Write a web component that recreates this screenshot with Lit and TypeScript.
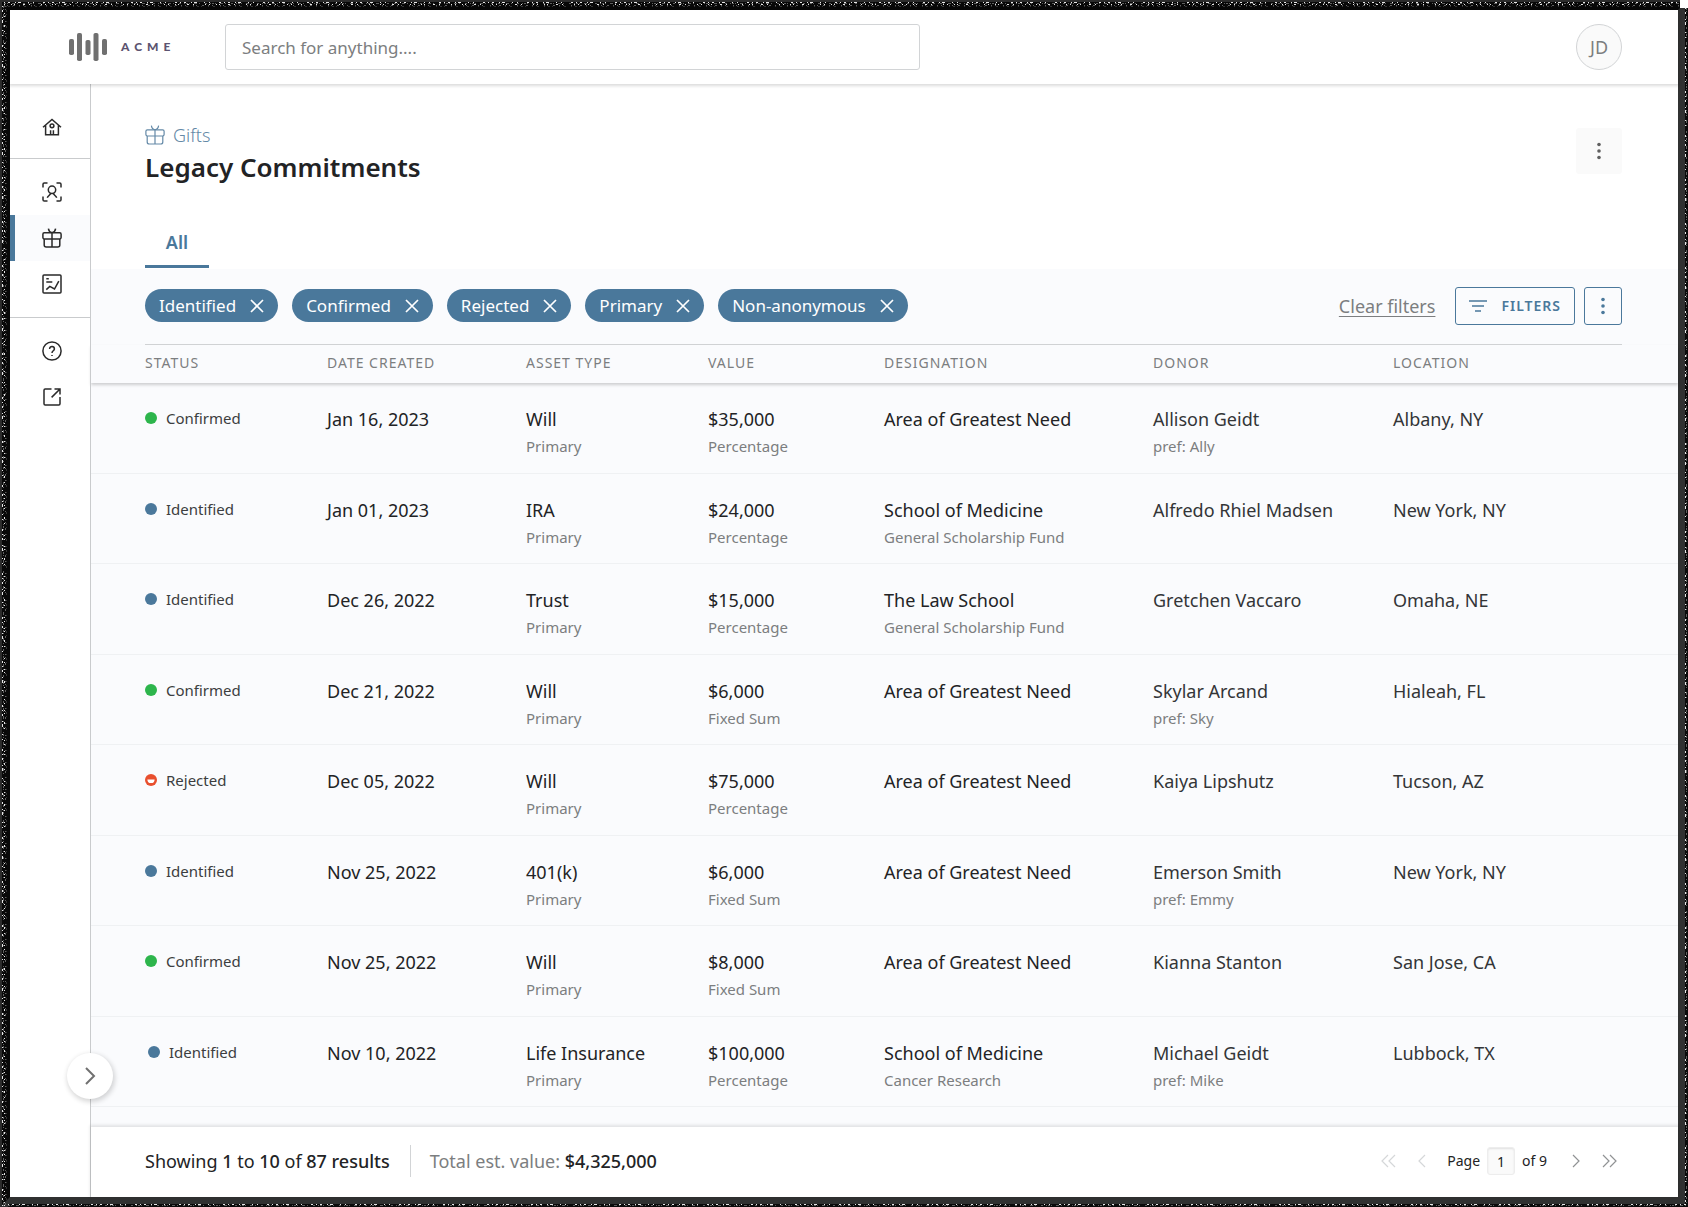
import { LitElement, html, css, svg, nothing } from "lit";
import { customElement, state } from "lit/decorators.js";

type Status = "Confirmed" | "Identified" | "Rejected";

interface Gift {
  status: Status;
  date: string;
  asset: string;
  value: string;
  valueKind: string;
  designation: string;
  fund?: string;
  donor: string;
  pref?: string;
  location: string;
  nested?: boolean;
}

const AREA = "Area of Greatest Need";

const GIFTS: Gift[] = [
  { status: "Confirmed", date: "Jan 16, 2023", asset: "Will", value: "$35,000", valueKind: "Percentage", designation: AREA, donor: "Allison Geidt", pref: "Ally", location: "Albany, NY" },
  { status: "Identified", date: "Jan 01, 2023", asset: "IRA", value: "$24,000", valueKind: "Percentage", designation: "School of Medicine", fund: "General Scholarship Fund", donor: "Alfredo Rhiel Madsen", location: "New York, NY" },
  { status: "Identified", date: "Dec 26, 2022", asset: "Trust", value: "$15,000", valueKind: "Percentage", designation: "The Law School", fund: "General Scholarship Fund", donor: "Gretchen Vaccaro", location: "Omaha, NE" },
  { status: "Confirmed", date: "Dec 21, 2022", asset: "Will", value: "$6,000", valueKind: "Fixed Sum", designation: AREA, donor: "Skylar Arcand", pref: "Sky", location: "Hialeah, FL" },
  { status: "Rejected", date: "Dec 05, 2022", asset: "Will", value: "$75,000", valueKind: "Percentage", designation: AREA, donor: "Kaiya Lipshutz", location: "Tucson, AZ" },
  { status: "Identified", date: "Nov 25, 2022", asset: "401(k)", value: "$6,000", valueKind: "Fixed Sum", designation: AREA, donor: "Emerson Smith", pref: "Emmy", location: "New York, NY" },
  { status: "Confirmed", date: "Nov 25, 2022", asset: "Will", value: "$8,000", valueKind: "Fixed Sum", designation: AREA, donor: "Kianna Stanton", location: "San Jose, CA" },
  { status: "Identified", date: "Nov 10, 2022", asset: "Life Insurance", value: "$100,000", valueKind: "Percentage", designation: "School of Medicine", fund: "Cancer Research", donor: "Michael Geidt", pref: "Mike", location: "Lubbock, TX", nested: true },
];

const COLUMNS = ["Status", "Date Created", "Asset Type", "Value", "Designation", "Donor", "Location"];

const ICONS = {
  home: svg`<path d="M1 10.200 10 2.500l9 7.700M3.600 8.500v9.300h12.800V8.500M8.600 17.500v-4.300M11.400 17.500v-4.300"/><circle cx="10" cy="8.800" r="1.900"/>`,
  person: svg`<path d="M1 5.500V2.300Q1 1 2.300 1h3.200M14.500 1h3.200Q19 1 19 2.300v3.200M19 14.500v3.200q0 1.300-1.300 1.300h-3.200M5.500 19H2.300Q1 19 1 17.700v-3.200"/><circle cx="10" cy="7.800" r="3.700"/><path d="M5.300 15.800c.7-1.900 2.500-2.500 3.500-4.400M14.700 15.800c-.7-1.900-2.500-2.500-3.500-4.400"/>`,
  gift: svg`<rect x="0.900" y="4.800" width="18.200" height="6.200" rx="1.400"/><path d="M2.200 11v6q0 2 2 2h11.600q2 0 2-2v-6M10 4.800V19M10 4.800C8.200 4.500 6.700 3 6.400.7M10 4.800c1.800-.3 3.300-1.800 3.600-4.100"/>`,
  chart: svg`<rect x="1" y="1" width="18" height="18" rx="1"/><path d="M4.300 4.800h2.500M4.300 8h6M4.300 15.600l3.500-3.200 4.700 2.600 4.300-7.800"/>`,
  help: svg`<circle cx="10" cy="10" r="9.100"/><path d="M7.600 7.900C7.600 4.800 12.400 4.900 12.400 7.900 12.400 9.800 10 9.800 10 12"/><path d="M10 14.100v.8"/>`,
  external: svg`<path d="M9.500 2H3.200Q2 2 2 3.200v13.600Q2 18 3.200 18h13.600q1.200 0 1.200-1.200V10M9.600 10.400 18 2M12.500 2H18v5.500"/>`,
};

function icon(shape: unknown, cls = "icon") {
  return html`<svg class=${cls} viewBox="0 0 20 20" aria-hidden="true">${shape}</svg>`;
}

function dots() {
  return html`<svg class="dots" viewBox="0 0 4 18" aria-hidden="true">
    <circle cx="2" cy="2.500" r="1.800" /><circle cx="2" cy="9" r="1.800" /><circle cx="2" cy="15.500" r="1.800" />
  </svg>`;
}

/* Speckled edge: rows of irregular dashes in white, grey and black. */
const SPECKS = [
  { cls: "pale", dash: "1 3 2 5 1 2 3 7 1 4 1 9 2 3" },
  { cls: "grey", dash: "2 1 1 4 3 2 1 5 2 3 1 1" },
  { cls: "pale", dash: "1 6 1 2 1 8 2 4 1 11 1 3" },
  { cls: "grey", dash: "1 2 1 5 2 4 1 3 1 7" },
  { cls: "dim", dash: "1 3 2 2 1 6 1 4 2 5" },
];

@customElement("app-root")
export class AppRoot extends LitElement {
  @state() private filters = ["Identified", "Confirmed", "Rejected", "Primary", "Non-anonymous"];

  static styles = css`
    :host {
      --blue: #4a789b;
      --ink: #222325;
      --muted: #7c7e80;
      --line: #d2d4d6;
      --tint: #fafbfd;
      display: block;
      box-sizing: border-box;
      min-height: 100vh;
      font-family: "Noto Sans", sans-serif;
      font-size: 18px;
      line-height: 24px;
      color: var(--ink);
    }
    *, *::before, *::after { box-sizing: border-box; }
    button, input { font: inherit; color: inherit; margin: 0; }
    button { background: none; border: 0; padding: 0; cursor: pointer; }
    svg { display: block; fill: none; stroke: currentColor; }

    .frame {
      position: relative;
      display: flex;
      flex-direction: column;
      min-height: 100vh;
      border: 10px solid #080808;
      border-right-color: #303131;
      border-bottom-color: #303131;
      background: #fff;
    }
    .grain { position: absolute; z-index: 4; left: -10px; top: -10px; width: calc(100% + 20px); height: calc(100% + 20px); overflow: hidden; pointer-events: none; }
    .far { overflow: visible; }
    .pale { stroke: #e6e6e6; }
    .grey { stroke: #606060; }
    .dim { stroke: #333; }
    .rim { stroke: #2c2c2c; stroke-width: 2; }
    .rim.dark { stroke: #0b0b0b; stroke-width: 4; }
    .notch { fill: #fff; stroke: none; }

    .topbar {
      position: relative;
      z-index: 2;
      display: flex;
      align-items: center;
      height: 74px;
      padding: 0 56px 0 59px;
      background: #fff;
      box-shadow: 0 1px 3px 1px rgba(0, 0, 0, 0.14);
    }
    .brand { display: flex; align-items: center; gap: 14px; width: 156px; color: #5c5470; text-decoration: none; font-family: Lato, sans-serif; font-size: 12px; font-weight: 900; letter-spacing: 5px; }
    .mark { width: 38px; height: 28px; fill: #707070; stroke: none; }
    .search { width: 695px; height: 46px; padding: 0 16px; border: 1px solid var(--line); border-radius: 3px; background: #fff; outline: none; font-size: 17px; }
    .search::placeholder { color: var(--muted); opacity: 1; }
    .avatar { width: 46px; height: 46px; margin-left: auto; border: 1px solid var(--line); border-radius: 50%; background: #fafafa; color: var(--muted); }

    .body { display: flex; flex: 1; }
    .side { position: relative; display: flex; flex-direction: column; width: 81px; border-right: 1px solid #c9cbcd; }
    .group { display: flex; flex-direction: column; padding: 10px 0; border-bottom: 1px solid #c9cbcd; }
    .group.first { padding: 20px 0 8px; }
    .group.last { border: 0; }
    .nav { display: grid; place-items: center; height: 46px; border-left: 5px solid transparent; padding-right: 2px; color: #2a2a2a; }
    .nav.active { border-left-color: var(--blue); background: var(--tint); }
    .icon { width: 20px; height: 20px; stroke-width: 1.500; }
    .expand { position: absolute; z-index: 3; right: -23px; bottom: 98px; display: grid; place-items: center; width: 46px; height: 46px; border-radius: 50%; background: #fff; box-shadow: 1px 2px 5px 1px rgba(0, 0, 0, 0.16); color: #707070; }
    .chevron { width: 20px; height: 20px; stroke-width: 2; }

    .main { display: flex; flex: 1; flex-direction: column; min-width: 0; }
    .heading { display: flex; justify-content: space-between; padding: 39px 56px 0 54px; }
    .crumb { display: flex; align-items: center; gap: 8px; color: #6489a7; text-decoration: none; font-weight: 300; }
    .crumb .icon { stroke-width: 1.200; }
    h1 { margin: 2px 0 0; font-size: 26px; line-height: 36px; font-weight: 600; }
    .more { display: grid; place-items: center; width: 46px; height: 46px; margin-top: 5px; border-radius: 3px; background: #fafafa; color: #606060; }
    .dots { width: 4px; height: 18px; fill: currentColor; stroke: none; }

    .tabs { display: flex; padding: 33px 54px 1px; }
    .tab { min-width: 64px; height: 50px; border-bottom: 3px solid var(--blue); color: var(--blue); font-weight: 600; }

    .sheet { display: flex; flex: 1; flex-direction: column; background: var(--tint); }
    .filters { display: flex; align-items: center; gap: 14px; height: 76px; margin: 0 56px 0 54px; padding-bottom: 2px; border-bottom: 1px solid var(--line); }
    .chip { display: flex; align-items: center; gap: 14px; height: 33px; padding: 0 14px; border-radius: 17px; background: var(--blue); color: #fff; font-size: 17px; }
    .cross { width: 14px; height: 14px; stroke-width: 1.700; }
    .clear { margin-left: auto; color: var(--muted); text-decoration: underline; text-underline-offset: 3px; text-decoration-thickness: 1px; }
    .outlined { display: flex; align-items: center; justify-content: center; gap: 14px; height: 38px; border: 1px solid var(--blue); border-radius: 3px; color: var(--blue); }
    .filter-button { margin-left: 6px; padding: 0 13px; font-size: 14px; font-weight: 600; letter-spacing: 1px; }
    .lines { width: 18px; height: 14px; stroke-width: 1.600; }
    .kebab { width: 38px; margin-left: -5px; }

    .table-area { display: flex; flex: 1; padding-bottom: 20px; }
    table { width: 100%; table-layout: fixed; border-collapse: separate; border-spacing: 0; }
    .c0 { width: 236px; } .c1 { width: 199px; } .c2 { width: 182px; } .c3 { width: 176px; }
    .c4 { width: 269px; } .c5 { width: 240px; } .c6 { width: 285px; }
    th, td { padding: 0; text-align: left; font-weight: 400; }
    th:first-child, td:first-child { padding-left: 54px; }
    thead { box-shadow: 0 2px 3px rgba(0, 0, 0, 0.18); }
    th { height: 38px; padding-bottom: 2px; font-size: 14px; line-height: 18px; letter-spacing: 1px; text-transform: uppercase; color: var(--muted); }
    td { height: 90px; padding-top: 24px; border-bottom: 1px solid #eff1f3; vertical-align: top; }
    .sub { display: block; margin-top: 4px; font-size: 15px; line-height: 22px; color: var(--muted); }
    .status { display: flex; align-items: center; gap: 9px; font-size: 15px; line-height: 22px; color: #3c3e40; }
    .status.nested { padding-left: 3px; }
    .dot { width: 12px; height: 12px; stroke: none; fill: var(--blue); }
    .dot.Confirmed { fill: #2db54c; }
    .dot.Rejected { fill: #e84f2e; }
    .smile { fill: #fff; }
    .soft { color: #333537; }

    .footer { position: relative; display: flex; align-items: center; height: 70px; padding: 0 61px 2px 54px; background: #fff; box-shadow: 0 -1px 3px 1px rgba(0, 0, 0, 0.1); }
    b { font-weight: 500; }
    .total { margin-left: 20px; padding-left: 19px; border-left: 1px solid var(--line); line-height: 32px; color: var(--muted); }
    .total b { color: var(--ink); }
    .pager { display: flex; align-items: center; margin-left: auto; font-size: 14px; }
    .page-label { display: flex; align-items: center; gap: 7px; margin-right: 4px; }
    .page-input { width: 28px; height: 28px; padding: 0; border: 1px solid #ededed; border-radius: 3px; background: #fafafa; text-align: center; box-shadow: inset 0 1px 2px rgba(0, 0, 0, 0.1); }
    .step { color: #909294; margin-left: 18px; }
    .step:disabled { color: #d5d7d9; margin: 0 18px 0 0; }
    .arrow { width: 15px; height: 14px; stroke-width: 1.200; }
  `;

  private removeFilter(name: string) {
    this.filters = this.filters.filter((f) => f !== name);
  }

  private renderGrain() {
    return html`<svg class="grain" aria-hidden="true">
      <line class="rim" x1="0" y1="1" x2="100%" y2="1" />
      <line class="rim" x1="1" y1="0" x2="1" y2="100%" />
      ${SPECKS.map((s, i) => svg`
        <line class=${s.cls} stroke-dasharray=${s.dash} x1="4" y1=${i + 2.5} x2="100%" y2=${i + 2.5} />
        <line class=${s.cls} stroke-dasharray=${s.dash} x1=${i + 2.5} y1="6" x2=${i + 2.5} y2="100%" />`)}
      <svg class="far" x="100%">
        <line class="rim dark" x1="-1" y1="8" x2="-1" y2="100%" />
        ${SPECKS.slice(0, 2).map((s, i) => svg`<line class=${s.cls} stroke-dasharray=${s.dash} x1=${i - 2.5} y1="8" x2=${i - 2.5} y2="100%" />`)}
        <rect class="notch" x="-8" y="0" width="8" height="8" />
      </svg>
      <svg class="far" y="100%">
        <line class="rim dark" x1="8" y1="-1" x2="100%" y2="-1" />
        ${SPECKS.slice(0, 2).map((s, i) => svg`<line class=${s.cls} stroke-dasharray=${s.dash} x1="8" y1=${i - 2.5} x2="100%" y2=${i - 2.5} />`)}
      </svg>
    </svg>`;
  }

  private renderRow(g: Gift) {
    return html`<tr>
      <td>
        <span class="status ${g.nested ? "nested" : ""}">
          <svg class="dot ${g.status}" viewBox="0 0 12 12" aria-hidden="true">
            <circle cx="6" cy="6" r="6" />
            ${g.status === "Rejected" ? svg`<path class="smile" d="M2.400 5.400h7.200a3.600 3.600 0 0 1-7.200 0z"/>` : nothing}
          </svg>${g.status}</span>
      </td>
      <td>${g.date}</td>
      <td>${g.asset}<span class="sub">Primary</span></td>
      <td>${g.value}<span class="sub">${g.valueKind}</span></td>
      <td>${g.designation}${g.fund ? html`<span class="sub">${g.fund}</span>` : nothing}</td>
      <td class="soft">${g.donor}${g.pref ? html`<span class="sub">pref: ${g.pref}</span>` : nothing}</td>
      <td class="soft">${g.location}</td>
    </tr>`;
  }

  private arrow(d: string) {
    return html`<svg class="arrow" viewBox="0 0 15 14" aria-hidden="true"><path d=${d} /></svg>`;
  }

  render() {
    return html`<div class="frame">
      ${this.renderGrain()}
      <header class="topbar">
        <a class="brand" href="#">
          <svg class="mark" viewBox="0 0 38 28" aria-hidden="true">
            <rect x="0" y="6" width="5" height="16" rx="1.800" /><rect x="8" y="0" width="5" height="28" rx="1.800" />
            <rect x="16.500" y="7" width="5" height="15" rx="1.800" /><rect x="24.500" y="0" width="5" height="28" rx="1.800" />
            <rect x="33" y="6" width="5" height="16" rx="1.800" />
          </svg>ACME</a>
        <input class="search" type="search" aria-label="Search" placeholder="Search for anything...." />
        <button class="avatar" aria-label="Account JD">JD</button>
      </header>
      <div class="body">
        <nav class="side" aria-label="Primary">
          <div class="group first"><a class="nav" href="#" aria-label="Home">${icon(ICONS.home)}</a></div>
          <div class="group">
            <a class="nav" href="#" aria-label="People">${icon(ICONS.person)}</a>
            <a class="nav active" href="#" aria-label="Gifts" aria-current="page">${icon(ICONS.gift)}</a>
            <a class="nav" href="#" aria-label="Reports">${icon(ICONS.chart)}</a>
          </div>
          <div class="group last">
            <a class="nav" href="#" aria-label="Help">${icon(ICONS.help)}</a>
            <a class="nav" href="#" aria-label="Open site">${icon(ICONS.external)}</a>
          </div>
          <button class="expand" aria-label="Expand menu">${icon(svg`<path d="M6 2l8 8-8 8"/>`, "chevron")}</button>
        </nav>
        <main class="main">
          <div class="heading">
            <div>
              <a class="crumb" href="#">${icon(ICONS.gift)}Gifts</a>
              <h1>Legacy Commitments</h1>
            </div>
            <button class="more" aria-label="More actions">${dots()}</button>
          </div>
          <div class="tabs"><button class="tab" aria-pressed="true">All</button></div>
          <section class="sheet">
            <div class="filters">
              ${this.filters.map(
                (f) => html`<button class="chip" aria-label="${f}, remove filter" @click=${() => this.removeFilter(f)}>
                  ${f}<svg class="cross" viewBox="0 0 14 14" aria-hidden="true"><path d="M1 1l12 12M13 1L1 13" /></svg>
                </button>`
              )}
              <a class="clear" href="#" @click=${() => (this.filters = [])}>Clear filters</a>
              <button class="outlined filter-button">
                <svg class="lines" viewBox="0 0 18 14" aria-hidden="true"><path d="M0 2h18M3 7h12M6 12h6" /></svg>FILTERS
              </button>
              <button class="outlined kebab" aria-label="Table options">${dots()}</button>
            </div>
            <div class="table-area">
              <table>
                <colgroup>${COLUMNS.map((_, i) => html`<col class="c${i}" />`)}</colgroup>
                <thead><tr>${COLUMNS.map((c) => html`<th scope="col">${c}</th>`)}</tr></thead>
                <tbody>${GIFTS.map((g) => this.renderRow(g))}</tbody>
              </table>
            </div>
          </section>
          <footer class="footer">
            <span>Showing <b>1</b> to <b>10</b> of <b>87 results</b></span>
            <span class="total">Total est. value: <b>$4,325,000</b></span>
            <div class="pager">
              <button class="step" disabled aria-label="First page">${this.arrow("M7 1L1 7l6 6M14 1L8 7l6 6")}</button>
              <button class="step" disabled aria-label="Previous page">${this.arrow("M11 1L5 7l6 6")}</button>
              <label class="page-label">Page <input class="page-input" .value=${"1"} /> of 9</label>
              <button class="step" aria-label="Next page">${this.arrow("M4 1l6 6-6 6")}</button>
              <button class="step" aria-label="Last page">${this.arrow("M1 1l6 6-6 6M8 1l6 6-6 6")}</button>
            </div>
          </footer>
        </main>
      </div>
    </div>`;
  }
}
